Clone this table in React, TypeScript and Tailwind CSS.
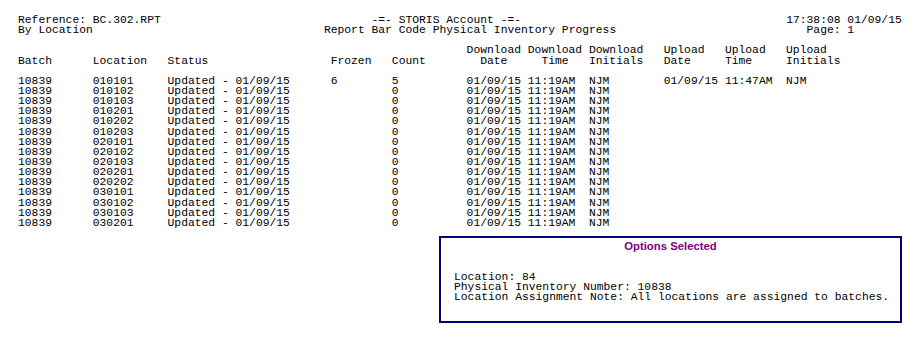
const cols = "grid grid-cols-[11ch_11ch_24ch_9ch_11ch_9ch_9ch_11ch_9ch_9ch_auto]";

const locations = [
  "010101",
  "010102",
  "010103",
  "010201",
  "010202",
  "010203",
  "020101",
  "020102",
  "020103",
  "020201",
  "020202",
  "030101",
  "030102",
  "030103",
  "030201",
];

type Row = {
  location: string;
  frozen: string;
  count: string;
  uploadDate: string;
  uploadTime: string;
  uploadInitials: string;
};

const rows: Row[] = locations.map((location, i) =>
  i === 0
    ? { location, frozen: "6", count: "5", uploadDate: "01/09/15", uploadTime: "11:47AM", uploadInitials: "NJM" }
    : { location, frozen: "", count: "0", uploadDate: "", uploadTime: "", uploadInitials: "" }
);

export default function App() {
  return (
    <div className="w-[920px] h-[338px] bg-white px-[18px] pt-[15px] text-black font-['Liberation_Mono','Courier_New',monospace] text-[11.33px] leading-[10.14px] overflow-hidden">
      {/* Report header */}
      <div className="grid grid-cols-[45ch_68ch_auto] whitespace-pre">
        <div>Reference: BC.302.RPT</div>
        <div className="pl-[7ch]">-=- STORIS Account -=-</div>
        <div>17:38:08 01/09/15</div>
        <div>By Location</div>
        <div>Report Bar Code Physical Inventory Progress</div>
        <div className="pl-[3ch]">Page: 1</div>
      </div>

      {/* Column headings */}
      <div className={`${cols} whitespace-pre mt-[10.14px]`}>
        <div>{"\n"}Batch</div>
        <div>{"\n"}Location</div>
        <div>{"\n"}Status</div>
        <div>{"\n"}Frozen</div>
        <div>{"\n"}Count</div>
        <div>{"Download\n  Date"}</div>
        <div>{"Download\n  Time"}</div>
        <div>{"Download\nInitials"}</div>
        <div>{"Upload\nDate"}</div>
        <div>{"Upload\nTime"}</div>
        <div>{"Upload\nInitials"}</div>
      </div>

      {/* Data rows */}
      <div className="mt-[10.14px]">
        {rows.map((r) => (
          <div key={r.location} className={`${cols} whitespace-pre`}>
            <div>10839</div>
            <div>{r.location}</div>
            <div>Updated - 01/09/15</div>
            <div>{r.frozen}</div>
            <div>{r.count}</div>
            <div>01/09/15</div>
            <div>11:19AM</div>
            <div>NJM</div>
            <div>{r.uploadDate}</div>
            <div>{r.uploadTime}</div>
            <div>{r.uploadInitials}</div>
          </div>
        ))}
      </div>

      {/* Options box */}
      <div className="flex justify-end mt-[8px]">
        <div className="w-[463px] h-[87px] border-2 border-[#000080] pt-[2px] pl-[13px]">
          <div className="text-center -ml-[13px] font-['Liberation_Sans',Arial,sans-serif] font-bold text-[11.33px] leading-[13px] text-[#800080]">
            Options Selected
          </div>
          <div className="mt-[19px] whitespace-pre">
            <div>Location: 84</div>
            <div>Physical Inventory Number: 10838</div>
            <div>Location Assignment Note: All locations are assigned to batches.</div>
          </div>
        </div>
      </div>
    </div>
  );
}
